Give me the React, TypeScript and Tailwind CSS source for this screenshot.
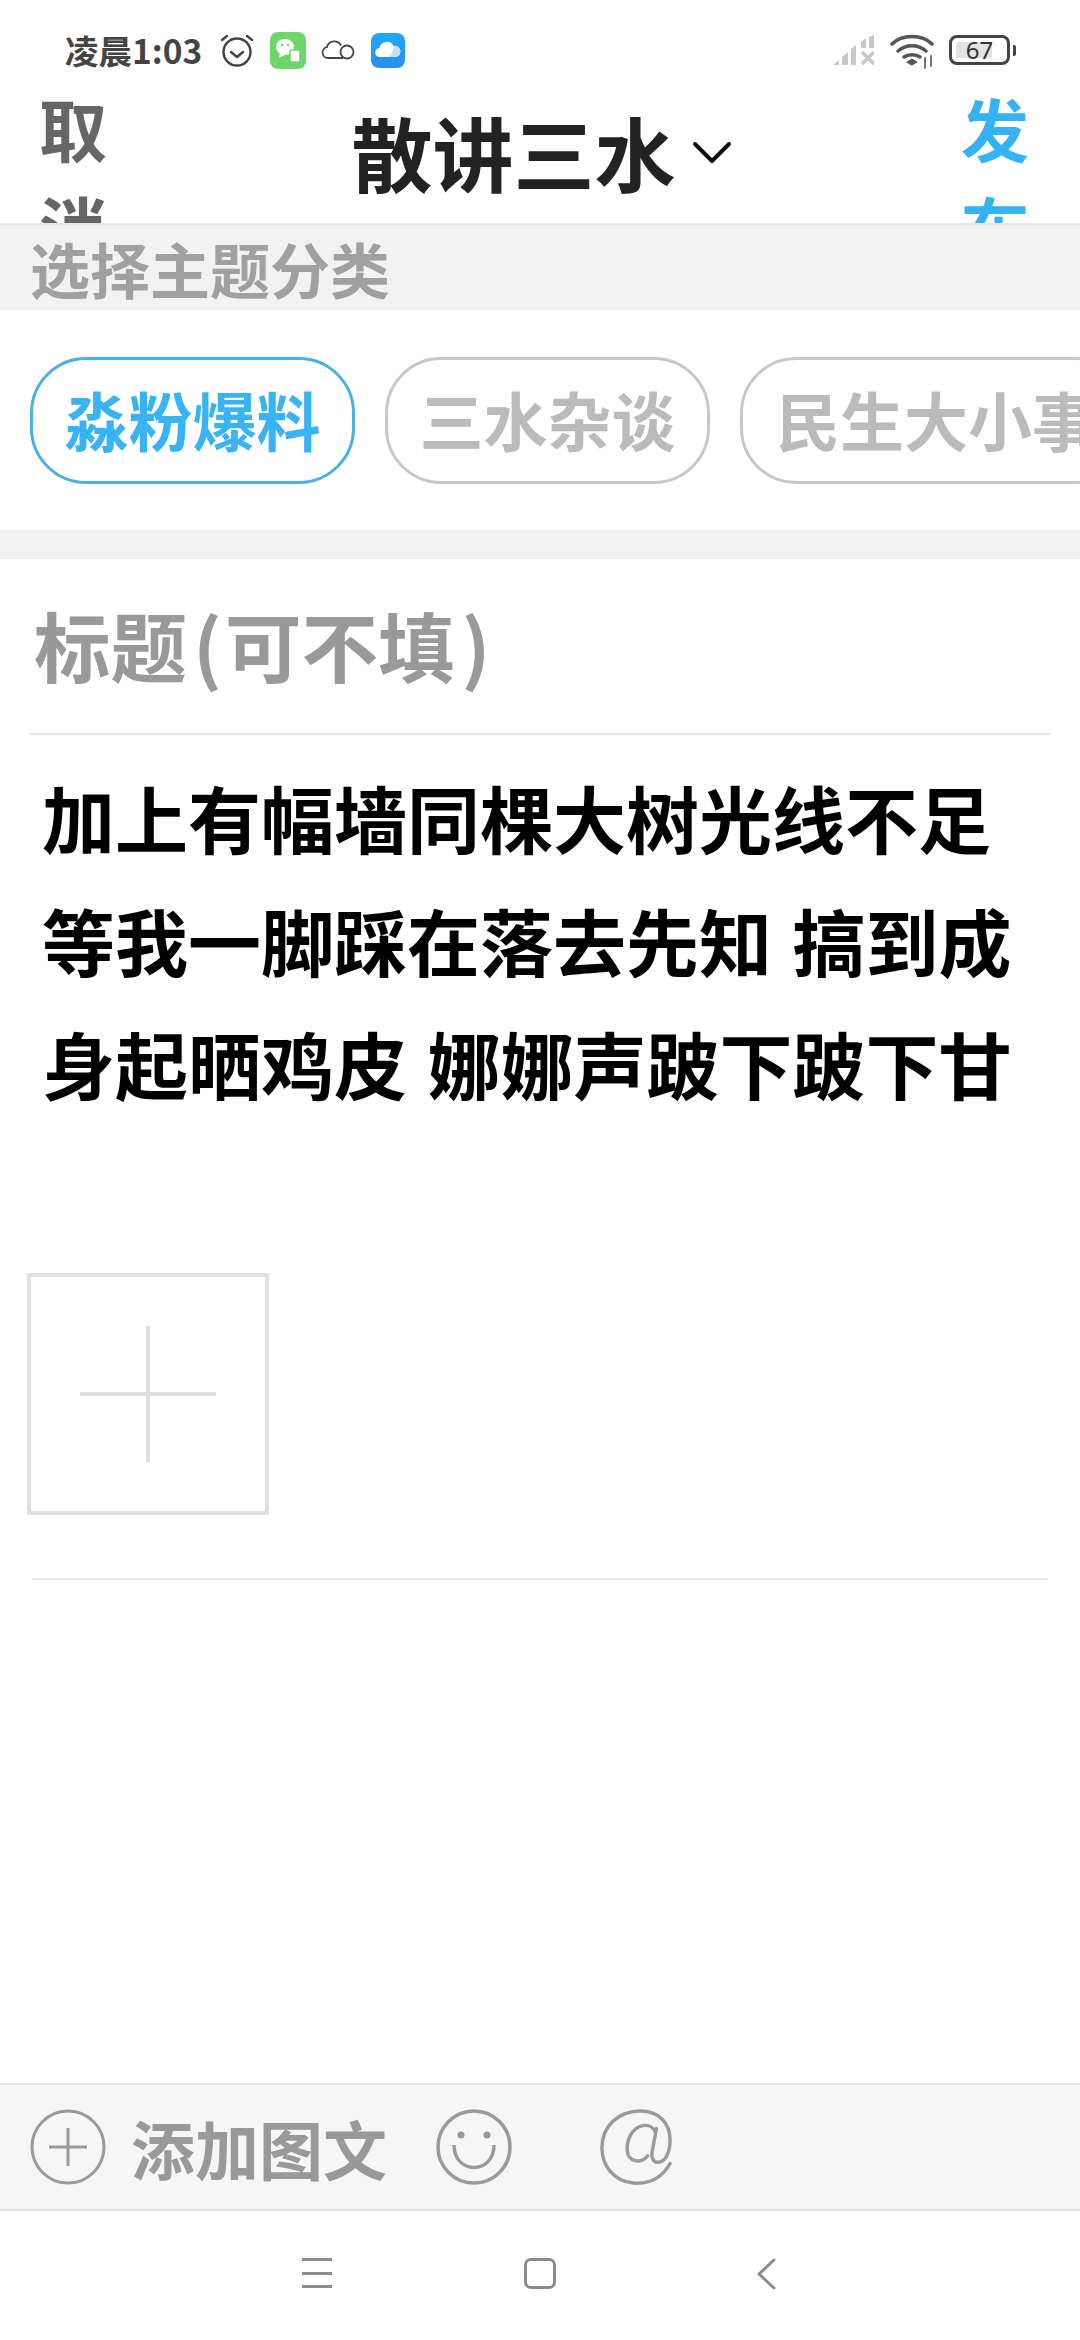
const font = { fontFamily: '"Noto Sans CJK SC", "Noto Sans", sans-serif' }

const topics = ['淼粉爆料', '三水杂谈', '民生大小事']

function AlarmIcon() {
  return (
    <svg width="36" height="36" viewBox="0 0 36 36" fill="none" stroke="#444" strokeWidth="2.4" strokeLinecap="round" strokeLinejoin="round">
      <circle cx="18" cy="20" r="13.5" />
      <path d="M12 20l6 5 6-5" />
      <path d="M3 8l5-4M33 8l-5-4" />
    </svg>
  )
}

function ChatTile() {
  return (
    <svg width="36" height="37" viewBox="0 0 36 37">
      <rect width="36" height="37" rx="8" fill="#6fd66c" />
      <ellipse cx="15" cy="15" rx="9" ry="8" fill="#fff" />
      <path d="M10 20l-1 6 6-3z" fill="#fff" />
      <circle cx="12" cy="13" r="1.3" fill="#6fd66c" />
      <circle cx="18" cy="13" r="1.3" fill="#6fd66c" />
      <rect x="20" y="18" width="10" height="12" rx="2" fill="#fff" stroke="#6fd66c" strokeWidth="1.5" />
    </svg>
  )
}

function CloudOutline() {
  return (
    <svg width="34" height="22" viewBox="0 0 34 22" fill="none" stroke="#444" strokeWidth="1.8">
      <path d="M22 19H7a5.5 5.5 0 0 1-1-10.9A7.5 7.5 0 0 1 20 6.5" />
      <circle cx="26" cy="13" r="6.5" />
    </svg>
  )
}

function CloudTile() {
  return (
    <svg width="34" height="35" viewBox="0 0 34 35">
      <defs>
        <linearGradient id="tile" x1="0" y1="0" x2="0" y2="1">
          <stop offset="0" stopColor="#1fa9f5" />
          <stop offset="1" stopColor="#2b8df0" />
        </linearGradient>
      </defs>
      <rect width="34" height="35" rx="8" fill="url(#tile)" />
      <path d="M9 24a4.5 4.5 0 0 1-.6-9A7.5 7.5 0 0 1 22.5 13a5.5 5.5 0 0 1 2.5 11z" fill="#fff" />
      <path d="M18 24c3-3 4-7 4.5-11a5.5 5.5 0 0 1 2.5 11z" fill="#bfe0f7" />
    </svg>
  )
}

function SignalIcon() {
  return (
    <svg width="41" height="30" viewBox="0 0 41 30" fill="#c8c8c8">
      <path d="M0 30l6-5v5zM9 22l6-5v13H9zM18 14l5-4v20h-5z" />
      <path d="M28 7l5-4v10h-5zM36 2l5-2v13h-5z" />
      <path d="M29 17l12 12M41 17L29 29" stroke="#c8c8c8" strokeWidth="3.5" />
    </svg>
  )
}

function WifiIcon() {
  return (
    <svg width="44" height="36" viewBox="0 0 44 36" fill="none" stroke="#555" strokeLinecap="round">
      <path d="M2 11C12 1 32 1 42 11" strokeWidth="3.5" />
      <path d="M8 18c8-7 20-7 28 0" strokeWidth="3.5" />
      <path d="M14 24c4-3 12-3 16 0" strokeWidth="3.5" />
      <path d="M17 29l5-3 5 3-5 3z" fill="#555" strokeWidth="1" />
      <path d="M35 25v10M41 23v10" stroke="#666" strokeWidth="1.8" />
    </svg>
  )
}

function Battery() {
  return (
    <div className="flex items-center gap-[3px]">
      <div className="relative flex h-[30px] w-[61px] items-center justify-center rounded-[8px] border-[3px] border-[#444]">
        <div className="absolute left-[4px] top-[4px] h-[16px] w-[36px] rounded-[2px] bg-[#e2e2e2]" />
        <span className="relative text-[24px] leading-none text-[#333]" style={{ fontFamily: '"Noto Sans", sans-serif' }}>67</span>
      </div>
      <div className="h-[11px] w-[3px] rounded-r-[2px] bg-[#444]" />
    </div>
  )
}

function StatusBar() {
  return (
    <div className="flex h-[84px] items-start justify-between pl-[65px] pr-[64px] pt-[31px]">
      <div className="flex items-center">
        <span className="w-[131px] text-[33.5px] font-semibold leading-[38px] text-[#444] whitespace-nowrap">凌晨1:03</span>
        <div className="ml-[23px] flex items-center">
          <AlarmIcon />
          <div className="ml-[15px]"><ChatTile /></div>
          <div className="ml-[15px]"><CloudOutline /></div>
          <div className="ml-[16px]"><CloudTile /></div>
        </div>
      </div>
      <div className="flex items-center">
        <SignalIcon />
        <div className="ml-[16px] mt-[2px]"><WifiIcon /></div>
        <div className="ml-[15px]"><Battery /></div>
      </div>
    </div>
  )
}

function NavBar() {
  return (
    <div className="flex h-[141px] items-start justify-between overflow-hidden border-b-2 border-[#e6e6e6] pl-[39px] pr-[51px]">
      <div className="-mt-[5px] w-[68px] text-[68px] font-semibold leading-[98px] text-[#666]">取消</div>
      <div className="ml-[15px] mt-[18px] flex items-center">
        <span className="text-[81px] font-semibold leading-[98px] text-[#222] whitespace-nowrap">散讲三水</span>
        <svg className="ml-[16px] mt-[4px]" width="40" height="26" viewBox="0 0 40 26" fill="none" stroke="#111" strokeWidth="4" strokeLinecap="round" strokeLinejoin="round">
          <path d="M3 4l17 17L37 4" />
        </svg>
      </div>
      <div className="-mt-[5px] w-[68px] text-[68px] font-semibold leading-[98px] text-[#35b2f4]">发布</div>
    </div>
  )
}

function TopicPills() {
  return (
    <div className="flex h-[220px] items-start gap-[30px] overflow-hidden bg-white pl-[30px] pt-[47px]">
      {topics.map((t, i) => (
        <div
          key={t}
          className={
            i === 0
              ? 'flex h-[127px] w-[325px] shrink-0 items-center justify-center rounded-[56px] border-[3px] border-[#4ab0e6] pb-[6px] text-[64px] font-semibold leading-none text-[#38b3f3] whitespace-nowrap'
              : i === 1
                ? 'flex h-[127px] w-[325px] shrink-0 items-center justify-center rounded-[56px] border-[3px] border-[#c8c8c8] pb-[6px] text-[64px] font-semibold leading-none text-[#bbbbbb] whitespace-nowrap'
                : 'flex h-[127px] shrink-0 items-center rounded-[56px] border-[3px] border-[#c8c8c8] px-[33px] pb-[6px] text-[64px] font-semibold leading-none text-[#bbbbbb] whitespace-nowrap'
          }
        >
          {t}
        </div>
      ))}
    </div>
  )
}

function BottomBar() {
  return (
    <div className="flex h-[128px] items-center border-y-2 border-[#e4e4e4] bg-[#f6f6f6] pl-[30px]">
      <svg width="76" height="76" viewBox="0 0 76 76" fill="none" stroke="#9a9a9a" strokeWidth="3">
        <circle cx="38" cy="38" r="36" />
        <path d="M19 38h38M38 19v38" />
      </svg>
      <span className="ml-[25px] text-[64px] font-bold leading-none text-[#999] whitespace-nowrap">添加图文</span>
      <svg className="ml-[49px]" width="76" height="76" viewBox="0 0 76 76" fill="none" stroke="#9a9a9a" strokeWidth="3.5">
        <circle cx="38" cy="38" r="36" />
        <path d="M18 36c0 30 40 30 40 0" />
        <circle cx="25" cy="26" r="3.5" fill="#9a9a9a" stroke="none" />
        <circle cx="51" cy="26" r="3.5" fill="#9a9a9a" stroke="none" />
      </svg>
      <svg className="ml-[88px]" width="72" height="78" viewBox="0 0 74 78" fill="none" stroke="#9a9a9a" strokeWidth="3.5" strokeLinecap="round">
        <path d="M72 56C62 74 46 77 34 76 14 74 2 58 2 40 2 18 18 2 42 2c18 0 30 12 30 30 0 6-1 11-3 15-2 7-12 11-15 4-1-2-1-5 0-9l4-22" />
        <path d="M57 24c-2-5-7-8-13-7-11 2-17 15-16 26 1 11 14 14 21 5" />
      </svg>
    </div>
  )
}

function SystemNav() {
  return (
    <div className="flex flex-1 items-start bg-white pt-[47px]">
      <div className="ml-[302px] flex h-[30px] w-[30px] flex-col justify-between">
        <div className="h-[3px] bg-[#8c8c8c]" />
        <div className="h-[3px] bg-[#8c8c8c]" />
        <div className="h-[3px] bg-[#8c8c8c]" />
      </div>
      <div className="ml-[192px] h-[31px] w-[32px] rounded-[7px] border-[3px] border-[#8c8c8c]" />
      <svg className="ml-[200px]" width="22" height="32" viewBox="0 0 22 32" fill="none" stroke="#8c8c8c" strokeWidth="3" strokeLinecap="round" strokeLinejoin="round">
        <path d="M18 2L3 16l15 14" />
      </svg>
    </div>
  )
}

export default function App() {
  return (
    <div className="flex h-[2340px] w-[1080px] flex-col overflow-hidden bg-white" style={font}>
      <StatusBar />
      <NavBar />

      <div className="h-[85px] bg-[#f2f2f2] pl-[30px] text-[60px] font-semibold leading-[85px] text-[#a0a0a0]">选择主题分类</div>
      <TopicPills />
      <div className="h-[29px] bg-[#f2f2f2]" />

      <div className="mx-[30px] flex h-[176px] items-center border-b-2 border-[#e6e6e6] pb-[3px] pl-[4px] text-[76.5px] font-semibold leading-none text-[#999] whitespace-nowrap">
        标题<span className="ml-[6px] mr-[3px]">(</span>可不填<span className="ml-[7px]">)</span>
      </div>

      <div className="pl-[42px] pt-[20px] text-[73px] font-semibold leading-[123px] text-black whitespace-nowrap [word-spacing:4px]">
        <div>加上有幅墙同棵大树光线不足</div>
        <div>等我一脚踩在落去先知 搞到成</div>
        <div>身起晒鸡皮 娜娜声跛下跛下甘</div>
      </div>

      <div className="ml-[27px] mt-[149px] flex h-[242px] w-[242px] items-center justify-center border-4 border-[#e0e0e0]">
        <svg width="136" height="136" viewBox="0 0 136 136" stroke="#dedede" strokeWidth="4">
          <path d="M0 68h136M68 0v136" />
        </svg>
      </div>

      <div className="mx-[32px] mt-[63px] h-[2px] bg-[#e8e8e8]" />
      <div className="flex-1" />

      <BottomBar />
      <div className="flex h-[129px]">
        <SystemNav />
      </div>
    </div>
  )
}
